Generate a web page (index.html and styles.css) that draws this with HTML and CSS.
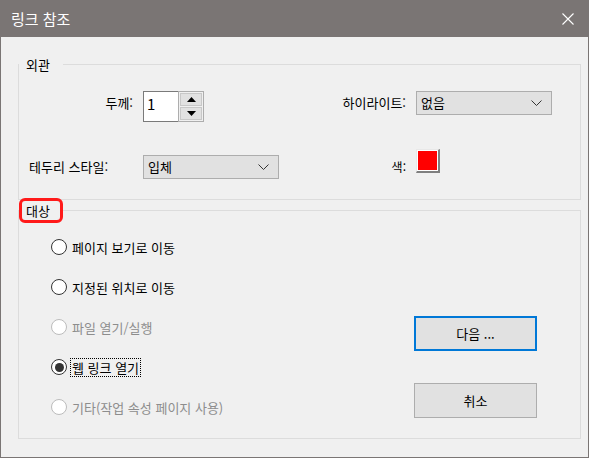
FILE: index.html
```html
<!DOCTYPE html>
<html lang="ko">
<head>
<meta charset="utf-8">
<title>링크 참조</title>
<link rel="stylesheet" href="styles.css">
</head>
<body>
<div class="window">
  <div class="titlebar">
    <span class="title">링크 참조</span>
    <svg class="close" width="12" height="12" viewBox="0 0 12 12"><path d="M0.5 0.5 L11.5 11.5 M11.5 0.5 L0.5 11.5" stroke="#fff" stroke-width="1.1" fill="none"/></svg>
  </div>
  <div class="content">
    <fieldset class="group group-look">
      <legend class="legend">외관</legend>
      <div class="look-grid">
        <div class="label label-right row1">두께:</div>
        <div class="spinner row1">
          <div class="spin-input">1</div>
          <div class="spin-buttons">
            <div class="spin-btn"><svg width="9" height="5" viewBox="0 0 9 5"><path d="M4.5 0 L9 5 L0 5 Z" fill="#000"/></svg></div>
            <div class="spin-btn"><svg width="9" height="5" viewBox="0 0 9 5"><path d="M0 0 L9 0 L4.5 5 Z" fill="#000"/></svg></div>
          </div>
        </div>
        <div class="label label-right row1">하이라이트:</div>
        <div class="select row1"><span>없음</span><svg class="chev" width="11" height="6" viewBox="0 0 11 6"><path d="M0.5 0.5 L5.5 5.5 L10.5 0.5" stroke="#333" fill="none"/></svg></div>
        <div class="label row2">테두리 스타일:</div>
        <div class="select row2"><span>입체</span><svg class="chev" width="11" height="6" viewBox="0 0 11 6"><path d="M0.5 0.5 L5.5 5.5 L10.5 0.5" stroke="#333" fill="none"/></svg></div>
        <div class="label label-right row2 color-label">색:</div>
        <div class="swatch row2"><div class="swatch-fill"></div></div>
      </div>
    </fieldset>
    <fieldset class="group group-target">
      <legend class="legend legend-marked">대상</legend>
      <div class="target-body">
        <div class="radios">
          <div class="radio-row"><span class="radio"></span><span class="radio-text">페이지 보기로 이동</span></div>
          <div class="radio-row"><span class="radio"></span><span class="radio-text">지정된 위치로 이동</span></div>
          <div class="radio-row disabled"><span class="radio"></span><span class="radio-text">파일 열기/실행</span></div>
          <div class="radio-row"><span class="radio checked"></span><span class="radio-text focus">웹 링크 열기</span></div>
          <div class="radio-row disabled"><span class="radio"></span><span class="radio-text">기타(작업 속성 페이지 사용)</span></div>
        </div>
        <div class="buttons">
          <div class="button default">다음 ...</div>
          <div class="button">취소</div>
        </div>
      </div>
    </fieldset>
  </div>
</div>
</body>
</html>
```

FILE: styles.css
```css
* { box-sizing: border-box; }
html, body { margin: 0; padding: 0; }
body {
  width: 589px;
  height: 458px;
  background: #f0f0f0;
  font-family: "Noto Sans CJK KR", "Noto Sans", sans-serif;
  font-size: 13px;
  color: #000;
  overflow: hidden;
}
.window {
  width: 589px;
  height: 458px;
  border: 1px solid #7a7574;
  border-top: none;
  background: #f0f0f0;
}
.titlebar {
  height: 37px;
  background: #7a7574;
  display: flex;
  align-items: center;
  padding: 0 15px 0 11px;
  margin: 0 -1px;
}
.title {
  color: #fff;
  font-size: 15px;
  line-height: 20px;
  flex: 1;
}
.close { display: block; }
.content {
  padding: 15px 7px 0 17px;
}
.group {
  margin: 0;
  padding: 0;
  border: 1px solid #dcdcdc;
  min-width: 0;
}
.legend {
  padding: 0 10px 0 4px;
  margin: 0;
  border: 3px solid transparent;
  border-radius: 6px;
  line-height: 19px;
  height: 25px;
}
.legend-marked { border-color: #ff1a1a; }

.look-grid {
  display: grid;
  grid-template-columns: 104px 136px 117px 136px;
  grid-template-rows: 31px 24px;
  column-gap: 10px;
  row-gap: 33px;
  padding: 14px 0 20px 10px;
}
.label { line-height: 24px; white-space: nowrap; }
.label-right { text-align: right; }
.row1 { align-self: start; }
.row2 { align-self: center; }

.spinner { display: flex; height: 31px; }
.spin-input {
  width: 35px;
  height: 31px;
  background: #fff;
  border: 1px solid #7a7a7a;
  border-right: none;
  padding: 2px 0 0 3px;
  font-size: 15px;
  line-height: 20px;
}
.spin-buttons {
  width: 26px;
  height: 31px;
  border: 1px solid #adadad;
  background: #f0f0f0;
  padding: 1px;
  display: flex;
  flex-direction: column;
  gap: 1px;
}
.spin-btn {
  flex: 1;
  background: #e1e1e1;
  border: 1px solid #c8c8c8;
  display: flex;
  align-items: center;
  justify-content: center;
}
.spin-btn svg { display: block; }

.select {
  height: 24px;
  background: #e1e1e1;
  border: 1px solid #adadad;
  display: flex;
  align-items: center;
  padding: 0 9px 0 4px;
  line-height: 20px;
}
.select span { flex: 1; }
.chev { display: block; }

.color-label { font-size: 12px; }
.swatch {
  width: 24px;
  height: 24px;
  margin-top: -12px;
  background: #fff;
  border-right: 2px solid #7f7f7f;
  border-bottom: 2px solid #7f7f7f;
  border-top: 1px solid #e8e8e8;
  border-left: 1px solid #e8e8e8;
  padding: 1px;
}
.swatch-fill { width: 100%; height: 100%; background: #ff0000; }

.group-target { margin-top: -2px; }
.target-body {
  display: flex;
  padding: 4px 43px 11px 32px;
}
.radios { flex: 1; }
.radio-row {
  height: 40px;
  display: flex;
  align-items: center;
  gap: 3px;
}
.radio {
  width: 16px;
  height: 16px;
  border-radius: 50%;
  border: 1px solid #333;
  background: #fff;
  display: flex;
  align-items: center;
  justify-content: center;
  flex: none;
}
.radio.checked { border-width: 1.5px; }
.radio.checked::after {
  content: "";
  width: 9px;
  height: 9px;
  border-radius: 50%;
  background: #333;
}
.radio-text {
  line-height: 17px;
  padding: 0 1px;
  border: 1px dotted transparent;
}
.radio-text.focus { border-color: #000; }
.disabled .radio { border-color: #bcbcbc; }
.disabled .radio-text { color: #8d8d8d; }

.buttons {
  width: 123px;
  display: flex;
  flex-direction: column;
  gap: 32px;
  padding-top: 89px;
}
.button {
  height: 35px;
  background: #e1e1e1;
  border: 1px solid #adadad;
  display: flex;
  align-items: center;
  justify-content: center;
  line-height: 20px;
}
.button.default { border: 2px solid #0078d7; }
```
